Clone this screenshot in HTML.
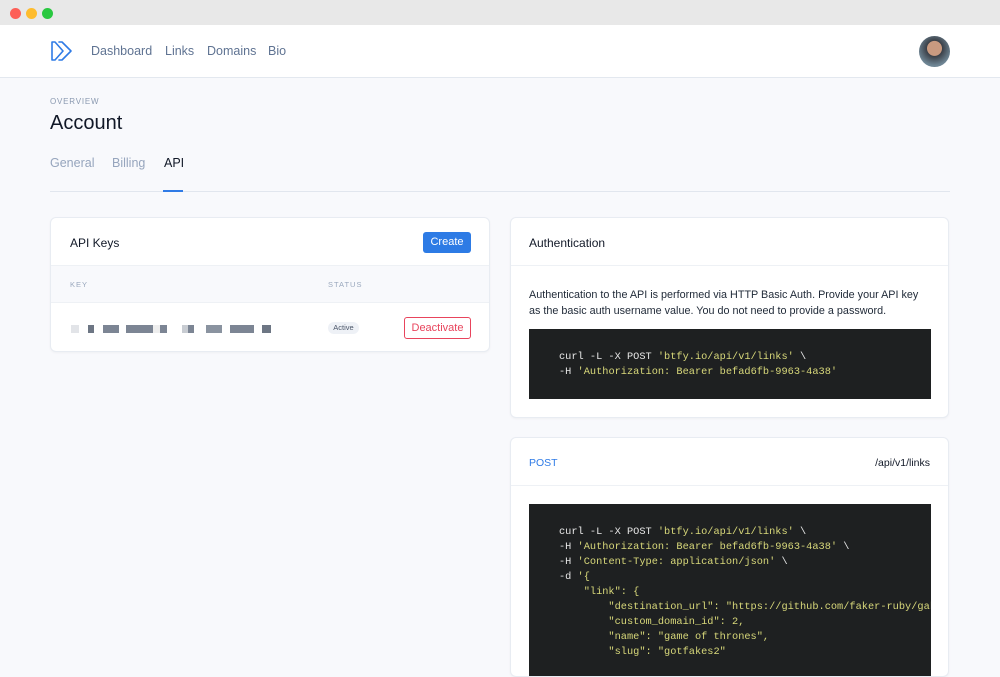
<!DOCTYPE html>
<html><head><style>
*{box-sizing:border-box;margin:0;padding:0}
body{width:1000px;height:657px;overflow:hidden;background:#f8f9fc;font-family:"Liberation Sans",sans-serif;position:relative}
.tb{position:absolute;left:0;top:0;width:1000px;height:25px;background:#e8e8e8}
.dot{position:absolute;top:8px;width:11px;height:11px;border-radius:50%}
.nav{position:absolute;top:25px;left:0;width:1000px;height:53px;background:#fff;border-bottom:1px solid #e3e8ef}
.nav a{position:absolute;top:19px;font-size:12.5px;color:#5f7392;text-decoration:none}
.abs{position:absolute}
.card{position:absolute;background:#fff;border:1px solid #e8ecf2;border-radius:6px;box-shadow:0 1px 2px rgba(0,0,0,.04);overflow:hidden}
.code{position:absolute;background:#1e2021;font-family:"Liberation Mono",monospace;font-size:10.3px;line-height:15px;color:#e8e8e8;white-space:pre;overflow:hidden}
.y{color:#d8d87a}
</style></head><body>
<div class="tb">
<div class="dot" style="left:10px;background:#fd5f57"></div>
<div class="dot" style="left:26px;background:#febc2e"></div>
<div class="dot" style="left:42px;background:#29c840"></div>
</div>
<div class="nav">
<svg class="abs" style="left:50px;top:15px" width="24" height="22" viewBox="0 0 24 22" fill="none" stroke="#2f7be6" stroke-width="1.6" stroke-linejoin="round" stroke-linecap="round"><path d="M2 2h3l8 9-8 9H2z"/><path d="M9 2h3l9 9-9 9H9"/></svg>
<a style="left:91px">Dashboard</a><a style="left:165px">Links</a><a style="left:207px">Domains</a><a style="left:268px">Bio</a>
<div class="abs" style="left:919px;top:11px;width:31px;height:31px;border-radius:50%;background:radial-gradient(circle at 50% 40%,#c99a80 0 30%,#3a3f47 32%,#6e8594 70%)"></div>
</div>
<div class="abs" style="left:50px;top:97px;font-size:8px;letter-spacing:.8px;color:#8a99b0">OVERVIEW</div>
<div class="abs" style="left:50px;top:112px;font-size:20px;color:#111827">Account</div>
<div class="abs" style="left:50px;top:156px;font-size:12.5px;color:#96a5bd">General</div>
<div class="abs" style="left:112px;top:156px;font-size:12.5px;color:#96a5bd">Billing</div>
<div class="abs" style="left:164px;top:156px;font-size:12.5px;color:#111827">API</div>
<div class="abs" style="left:50px;top:191px;width:900px;height:1px;background:#e1e6ee"></div>
<div class="abs" style="left:163px;top:190px;width:20px;height:2px;background:#2f7be6"></div>

<div class="card" style="left:50px;top:217px;width:440px;height:135px">
<div class="abs" style="left:19px;top:18px;font-size:12px;color:#111827">API Keys</div>
<div class="abs" style="left:372px;top:14px;width:48px;height:21px;background:#2d7be5;border-radius:3px;color:#fff;font-size:11px;text-align:center;line-height:21px">Create</div>
<div class="abs" style="left:0;top:47px;width:440px;height:38px;background:#f8f9fc;border-top:1px solid #eef1f5;border-bottom:1px solid #eef1f5"></div>
<div class="abs" style="left:19px;top:62px;font-size:7.5px;letter-spacing:1px;color:#9aa8bd">KEY</div>
<div class="abs" style="left:277px;top:62px;font-size:7.5px;letter-spacing:1px;color:#9aa8bd">STATUS</div>
<div class="abs" style="left:20px;top:107px;height:8px;width:200px;background:linear-gradient(90deg,#e2e4e8 0 8px,transparent 8px 17px,#6d7684 17px 23px,transparent 23px 32px,#7c8594 32px 48px,transparent 48px 55px,#7c8594 55px 82px,#eee 82px 89px,#7c8594 89px 96px,transparent 96px 111px,#c8ccd2 111px 117px,#7c8594 117px 123px,transparent 123px 135px,#8a93a0 135px 151px,transparent 151px 159px,#7c8594 159px 183px,transparent 183px 191px,#6d7684 191px 198px)"></div>
<div class="abs" style="left:277px;top:104px;width:31px;height:12px;border-radius:6px;background:#eef1f6;font-size:7.5px;color:#4a5568;text-align:center;line-height:12px">Active</div>
<div class="abs" style="left:353px;top:99px;width:67px;height:22px;border:1px solid #e8445c;border-radius:3px;color:#e8445c;font-size:11px;text-align:center;line-height:20px">Deactivate</div>
</div>

<div class="card" style="left:510px;top:217px;width:439px;height:201px">
<div class="abs" style="left:18px;top:18px;font-size:12px;color:#111827">Authentication</div>
<div class="abs" style="left:0;top:47px;width:439px;height:1px;background:#eef1f5"></div>
<div class="abs" style="left:18px;top:69px;width:402px;font-size:10.8px;line-height:16px;color:#1f2937">Authentication to the API is performed via HTTP Basic Auth. Provide your API key as the basic auth username value. You do not need to provide a password.</div>
<div class="code" style="left:18px;top:111px;width:402px;height:70px;padding:21px 0 0 30px">curl -L -X POST <span class="y">'btfy.io/api/v1/links'</span> \
-H <span class="y">'Authorization: Bearer befad6fb-9963-4a38'</span></div>
</div>

<div class="card" style="left:510px;top:437px;width:439px;height:240px">
<div class="abs" style="left:18px;top:19px;font-size:10.5px;color:#2f7be6">POST</div>
<div class="abs" style="right:18px;top:19px;font-size:10.5px;color:#111827">/api/v1/links</div>
<div class="abs" style="left:0;top:47px;width:439px;height:1px;background:#eef1f5"></div>
<div class="code" style="left:18px;top:66px;width:402px;height:200px;padding:21px 0 0 30px">curl -L -X POST <span class="y">'btfy.io/api/v1/links'</span> \
-H <span class="y">'Authorization: Bearer befad6fb-9963-4a38'</span> \
-H <span class="y">'Content-Type: application/json'</span> \
-d <span class="y">'{
    "link": {
        "destination_url": "https://github.com/faker-ruby/gaker",
        "custom_domain_id": 2,
        "name": "game of thrones",
        "slug": "gotfakes2"</span></div>
</div>
</body></html>
